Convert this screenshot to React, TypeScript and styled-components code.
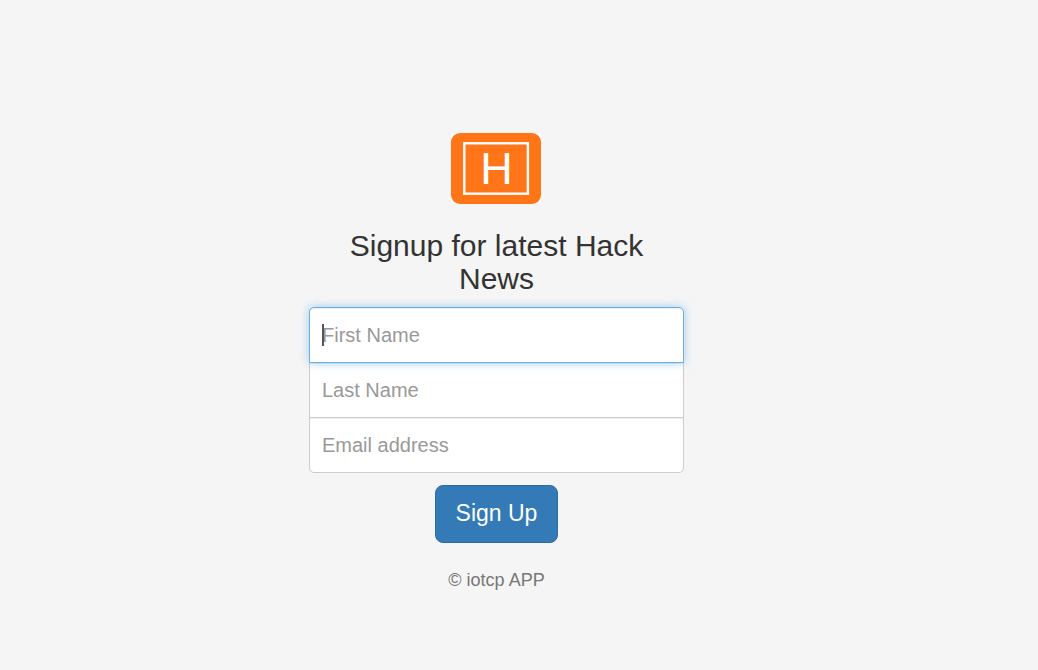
import React from "react";
import styled, { createGlobalStyle, css } from "styled-components";

const GlobalStyle = createGlobalStyle`
  *, *::before, *::after { box-sizing: border-box; }
  body {
    margin: 0;
    background: #f5f5f5;
    color: #333;
    font-family: "Liberation Sans", Arial, sans-serif;
  }
`;

const Page = styled.main`
  display: flex;
  justify-content: center;
  min-height: 100vh;
  padding: 133px 45px 40px 0;
`;

const SignupForm = styled.form`
  display: flex;
  flex-direction: column;
  align-items: center;
  width: 100%;
  max-width: 375px;
`;

const Logo = styled.svg`
  display: block;
  width: 91px;
  height: 71px;
`;

const Heading = styled.h1`
  margin: 25px 0 12px;
  padding: 0 12px;
  font-size: 30px;
  font-weight: 400;
  line-height: 33px;
  text-align: center;
`;

const Fields = styled.div`
  width: 100%;
  margin-bottom: 12px;
`;

const Field = styled.div`
  position: relative;

  & + & {
    margin-top: -1px;
  }

  &:first-child {
    z-index: 1;
  }
`;

const TextInput = styled.input<{ $active?: boolean }>`
  display: block;
  width: 100%;
  height: 56px;
  padding: 12px;
  border: 1px solid #ccc;
  border-radius: 0;
  outline: 0;
  background: #fff;
  color: #555;
  font-family: inherit;
  font-size: 20px;
  line-height: 24px;
  box-shadow: inset 0 1px 1px rgba(0, 0, 0, 0.075);

  &::placeholder {
    color: #999;
    opacity: 1;
  }

  ${Field}:first-child & {
    border-top-left-radius: 5px;
    border-top-right-radius: 5px;
  }

  ${Field}:last-child & {
    border-bottom-left-radius: 5px;
    border-bottom-right-radius: 5px;
  }

  ${({ $active }) =>
    $active &&
    css`
      border-color: #66afe9;
      box-shadow:
        inset 0 1px 1px rgba(0, 0, 0, 0.075),
        0 0 10px rgba(102, 175, 233, 0.6);
    `}
`;

const Caret = styled.span`
  position: absolute;
  top: 17px;
  left: 13px;
  width: 2px;
  height: 22px;
  background: #555;
`;

const SubmitButton = styled.button`
  height: 58px;
  padding: 0 20px 2px;
  border: 1px solid #2e6da4;
  border-radius: 8px;
  background: #337ab7;
  color: #fff;
  font-family: inherit;
  font-size: 23px;
  line-height: 30px;
  cursor: pointer;
`;

const Copyright = styled.p`
  margin: 25px 0 0;
  color: #777;
  font-size: 18px;
  line-height: 25px;
`;

const fields = [
  { name: "firstName", label: "First Name", type: "text", active: true },
  { name: "lastName", label: "Last Name", type: "text", active: false },
  { name: "email", label: "Email address", type: "email", active: false },
];

export default function App() {
  return (
    <>
      <GlobalStyle />
      <Page>
        <SignupForm onSubmit={(event) => event.preventDefault()}>
          <Logo viewBox="0 0 90 71" preserveAspectRatio="xMinYMid" role="img" aria-label="Hack News logo">
            <rect width="90" height="71" rx="2" fill="#fff" />
            <rect width="90" height="71" rx="9" fill="#ff7518" />
            <rect x="13.3" y="10.3" width="63.6" height="50.4" fill="none" stroke="#fff" strokeWidth="2.4" />
            <text x="45.5" y="51" textAnchor="middle" fontFamily="Liberation Sans, Arial, sans-serif" fontSize="45" fill="#fff">
              H
            </text>
          </Logo>
          <Heading>Signup for latest Hack News</Heading>
          <Fields>
            {fields.map(({ name, label, type, active }) => (
              <Field key={name}>
                <TextInput
                  name={name}
                  type={type}
                  placeholder={label}
                  aria-label={label}
                  $active={active}
                />
                {active && <Caret aria-hidden="true" />}
              </Field>
            ))}
          </Fields>
          <SubmitButton type="submit">Sign Up</SubmitButton>
          <Copyright>© iotcp APP</Copyright>
        </SignupForm>
      </Page>
    </>
  );
}
